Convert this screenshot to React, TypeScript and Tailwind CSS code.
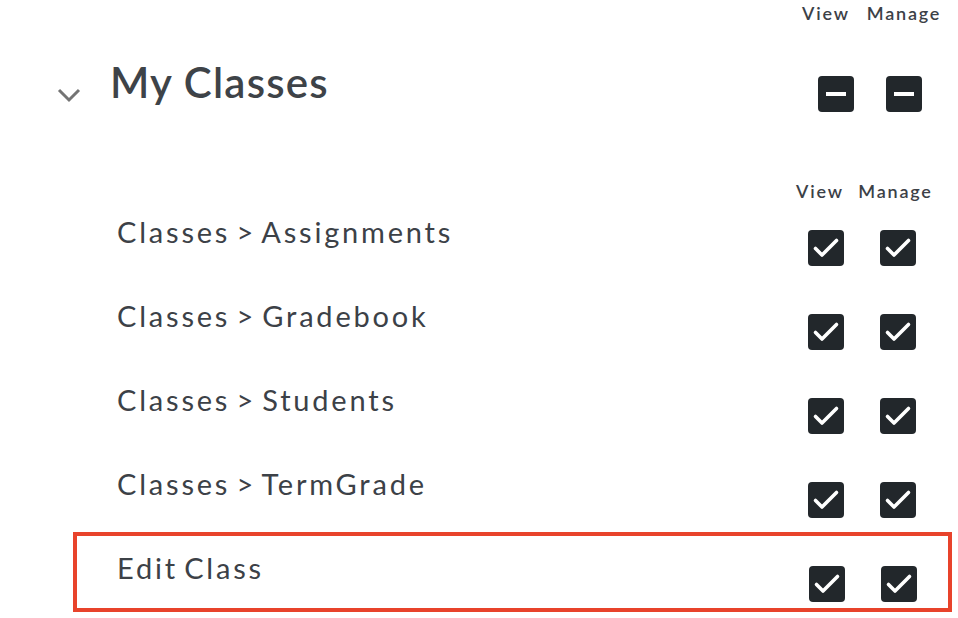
import React from "react";

const Check = () => (
  <div className="w-[36px] h-[36px] rounded-[4px] bg-[#22272b] flex items-center justify-center">
    <svg width="36" height="36" viewBox="0 0 36 36" fill="none">
      <path d="M7.5 18.5l6.5 6.5L28.5 10.5" stroke="#fff" strokeWidth="3.6" strokeLinecap="round" strokeLinejoin="round" />
    </svg>
  </div>
);

const Minus = () => (
  <div className="w-[36px] h-[36px] rounded-[4px] bg-[#22272b] flex items-center justify-center">
    <div className="w-[20px] h-[4px] bg-white" />
  </div>
);

const rows = [
  "Classes > Assignments",
  "Classes > Gradebook",
  "Classes > Students",
  "Classes > TermGrade",
];

export default function App() {
  return (
    <div className="w-[958px] h-[618px] bg-white overflow-hidden font-['Lato',sans-serif] text-[#3c4147]">
      {/* top header */}
      <div className="flex pl-[796px] pt-[2px] h-[24px] text-[18px] leading-[22px] font-semibold tracking-[1.8px]">
        <span className="w-[60px] text-center">View</span>
        <span className="w-[96px] text-center">Manage</span>
      </div>

      {/* section row */}
      <div className="flex items-start h-[106px] pt-[30px] pl-[57px] pr-[36px]">
        <svg className="mt-[33px]" width="24" height="16" viewBox="0 0 24 16" fill="none">
          <path d="M2 3l10 10L22 3" stroke="#747474" strokeWidth="3" />
        </svg>
        <div className="ml-[29px] mt-[3px] text-[42px] leading-[50px] font-semibold tracking-[1.2px] text-[#3e4348]">My Classes</div>
        <div className="ml-auto mt-[22px] flex gap-[32px]">
          <Minus />
          <Minus />
        </div>
      </div>

      {/* second header */}
      <div className="flex pl-[790px] mt-[50px] h-[27px] text-[18px] leading-[22px] font-semibold tracking-[1.8px]">
        <span className="w-[60px] text-center">View</span>
        <span className="w-[91px] text-center">Manage</span>
      </div>

      {/* rows */}
      {rows.map((r) => (
        <div key={r} className="flex items-start h-[84px] pl-[117px] pr-[42px]">
          <div className="flex-1 mt-[8px] text-[29px] leading-[34px] tracking-[2.8px] [word-spacing:-4px]">{r}</div>
          <div className="mt-[23px] flex gap-[36px]">
            <Check />
            <Check />
          </div>
        </div>
      ))}

      <div className="ml-[73px] mt-[-11px] w-[879px] h-[80px] border-4 border-[#e8432b] flex items-start pl-[40px] pr-[31px]">
        <div className="flex-1 mt-[15px] text-[29px] leading-[34px] tracking-[2.8px] [word-spacing:-4px]">Edit Class</div>
        <div className="mt-[30px] flex gap-[36px]">
          <Check />
          <Check />
        </div>
      </div>
    </div>
  );
}
